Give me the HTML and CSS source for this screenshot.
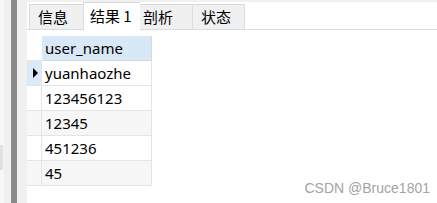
FILE: index.html
```html
<!DOCTYPE html>
<html lang="zh">
<head>
    <meta charset="UTF-8">
    <title>结果 1</title>
    <link rel="stylesheet" href="styles.css">
</head>
<body>
    <div class="window">
        <div class="edge">
            <div class="edge-thumb"></div>
        </div>
        <div class="gutter"></div>
        <div class="splitter"></div>
        <div class="gutter wide"></div>

        <div class="panel">
            <div class="tabs">
                <div class="tab">信息</div>
                <div class="tab active">结果 1</div>
                <div class="tab">剖析</div>
                <div class="tab">状态</div>
            </div>

            <div class="grid">
                <div class="row head">
                    <div class="marker"></div>
                    <div class="cell">user_name</div>
                </div>
                <div class="row current">
                    <div class="marker"><span class="arrow"></span></div>
                    <div class="cell">yuanhaozhe</div>
                </div>
                <div class="row">
                    <div class="marker"></div>
                    <div class="cell">123456123</div>
                </div>
                <div class="row odd">
                    <div class="marker"></div>
                    <div class="cell">12345</div>
                </div>
                <div class="row">
                    <div class="marker"></div>
                    <div class="cell">451236</div>
                </div>
                <div class="row odd">
                    <div class="marker"></div>
                    <div class="cell">45</div>
                </div>
            </div>
        </div>

        <div class="watermark">CSDN @Bruce1801</div>
    </div>
</body>
</html>
```

FILE: styles.css
```css
* {
    margin: 0;
    padding: 0;
    box-sizing: border-box;
}

body {
    background: #fff;
    font-family: "Noto Sans", "Noto Sans CJK SC", sans-serif;
}

.window {
    position: relative;
    display: flex;
    width: 437px;
    height: 203px;
    overflow: hidden;
}

/* left side strips */
.edge {
    width: 4px;
    background: #f7f7f7;
    padding-top: 145px;
}

.edge-thumb {
    width: 3px;
    height: 25px;
    background: #e2e2e2;
}

.gutter {
    width: 7px;
    background: #f0f0f0;
}

.gutter.wide {
    width: 10px;
}

.splitter {
    width: 6px;
    background: #8a8a8a;
}

.panel {
    flex: 1;
    background: #fff;
}

/* tabs */
.tabs {
    display: flex;
    align-items: flex-end;
    height: 30px;
    padding-left: 2px;
    border-top: 2px solid #f0f0f0;
    border-bottom: 1px solid #dcdcdc;
    font-family: "Noto Sans CJK SC", sans-serif;
    font-size: 15px;
}

.tab {
    height: 25px;
    line-height: 24px;
    padding: 0 8px;
    background: #f0f0f0;
    border: 1px solid #dcdcdc;
    border-bottom: none;
    border-right: none;
    color: #000;
    width: 54px;
}

.tab:last-child {
    border-right: 1px solid #dcdcdc;
    width: 53px;
}

.tab.active {
    height: 28px;
    width: 57px;
    background: #fff;
    margin-bottom: -1px;
    padding-left: 6px;
    line-height: 26px;
}

.tab.active + .tab {
    border-left: none;
    width: 52px;
    padding-left: 3px;
}

/* result grid */
.grid {
    margin-top: 6px;
    font-size: 15px;
    color: #000;
}

.row {
    display: flex;
    height: 25px;
}

.marker {
    width: 15px;
    border-right: 1px solid #e4e4e4;
    border-bottom: 1px solid #e4e4e4;
    display: flex;
    align-items: center;
    padding-left: 6px;
}

.cell {
    width: 110px;
    padding-left: 3px;
    line-height: 24px;
    border-right: 1px solid #e4e4e4;
    border-bottom: 1px solid #e4e4e4;
}

.head .marker {
    border-right-color: #fff;
}

.head .cell {
    background: #d9e8f7;
    border-color: #d4dde6;
}

.current .marker {
    background: #dbe9f8;
}

.odd .cell,
.odd .marker {
    background: #f7f7f7;
}

.arrow {
    width: 0;
    height: 0;
    border-top: 5px solid transparent;
    border-bottom: 5px solid transparent;
    border-left: 5px solid #000;
}

.watermark {
    position: absolute;
    right: 7px;
    top: 180px;
    font-family: "Liberation Sans", Arial, sans-serif;
    font-size: 14px;
    color: #a3a3a3;
}
```
